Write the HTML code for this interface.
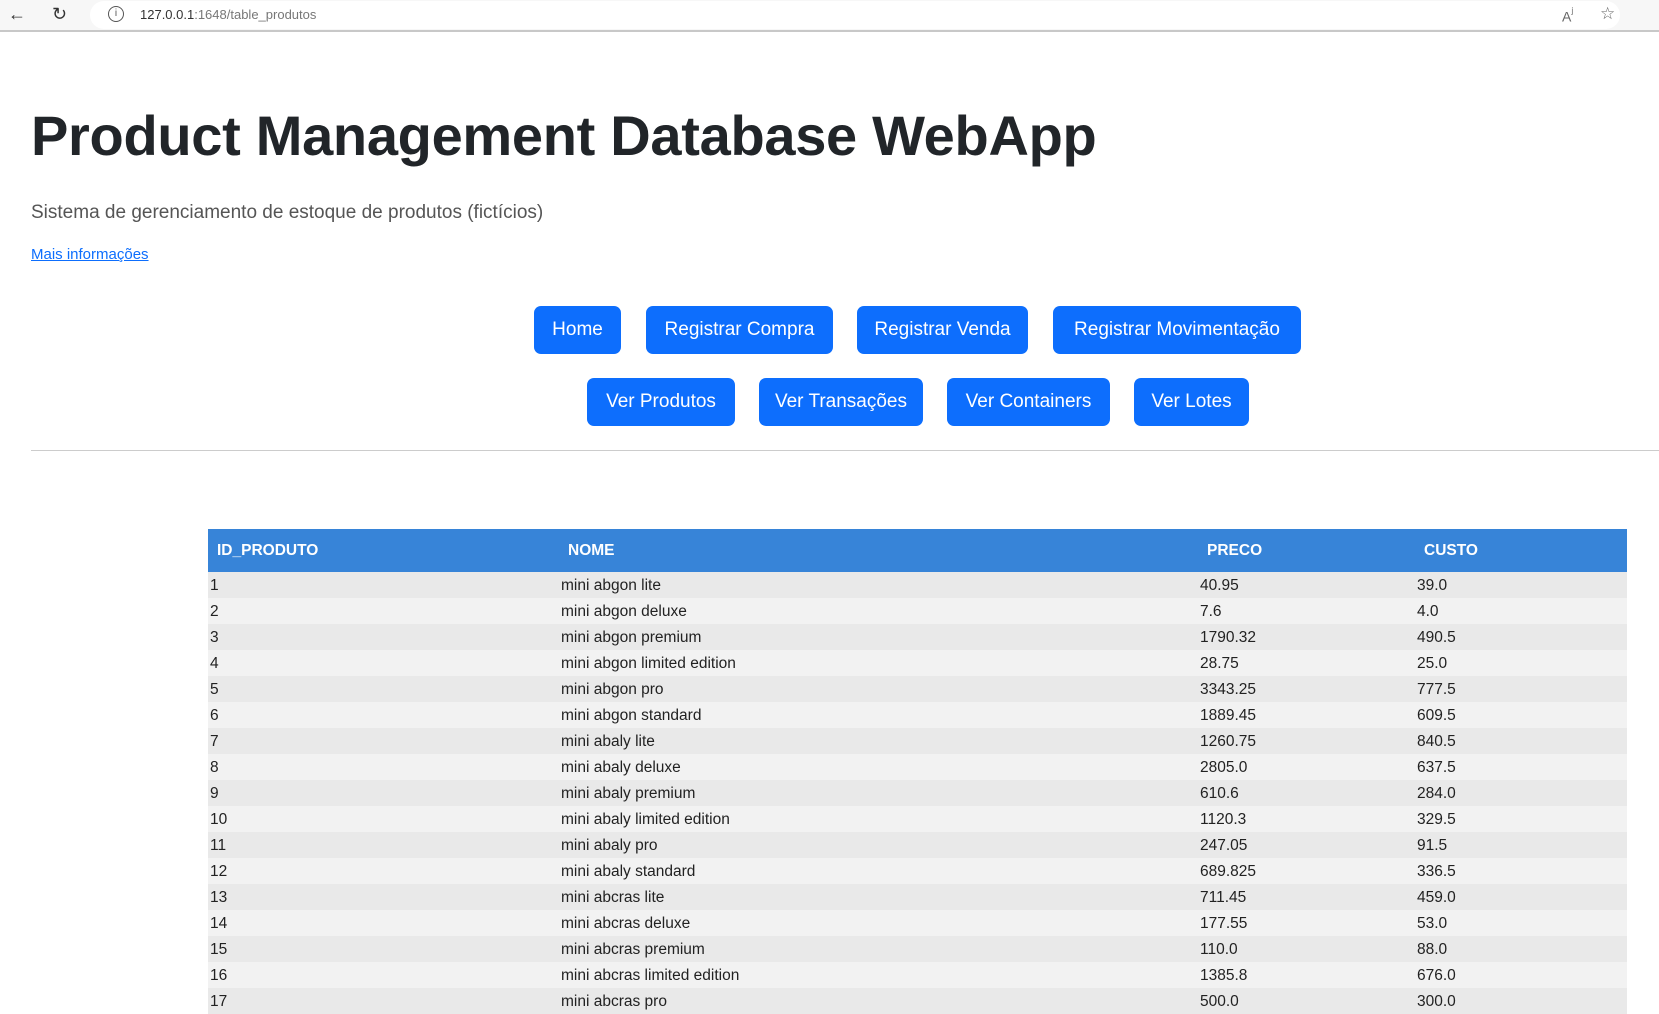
<!DOCTYPE html>
<html><head><meta charset="utf-8"><style>
*{margin:0;padding:0;box-sizing:border-box}
body{width:1659px;height:993px;overflow:hidden;background:#fff;font-family:"Liberation Sans",sans-serif;position:relative}
.bar{position:absolute;left:0;top:0;width:1659px;height:32px;background:#f7f7f7;border-bottom:2px solid #c8c8c8}
.url{position:absolute;left:90px;top:1px;width:1530px;height:28px;background:#fff;border-radius:14px;font-size:13px;color:#333;padding:6px 0 0 50px}
.url span{color:#777}
h1{position:absolute;left:31px;top:103px;font-size:56px;font-weight:bold;color:#212529;letter-spacing:-0.3px;white-space:nowrap}
.sub{position:absolute;left:31px;top:202px;font-size:19px;color:#555}
.lnk{position:absolute;left:31px;top:246px;font-size:15px;color:#0d6efd;text-decoration:underline}
.btn{position:absolute;background:#0d6efd;color:#fff;border-radius:7px;height:48px;font-size:19px;display:flex;align-items:center;justify-content:center;white-space:nowrap}
hr{position:absolute;left:31px;top:450px;width:1628px;border:0;border-top:1px solid #ccc}
table{position:absolute;left:208px;top:529px;width:1419px;border-collapse:collapse;font-size:15.5px;color:#222}
th{background:#3784d8;color:#fff;text-align:left;height:43px;padding-left:9px;font-size:15.5px}
td{height:26px;padding-left:2px;padding-top:2px}
tr:nth-child(odd) td{background:#f2f2f2}
tr:nth-child(even) td{background:#e9e9e9}
</style></head><body>
<div class="bar"><span style="position:absolute;left:8px;top:4px;font-size:18px;color:#333">←</span><span style="position:absolute;left:52px;top:4px;font-size:18px;color:#333">↻</span><div class="url"><span style="position:absolute;left:18px;top:5px;width:16px;height:16px;border:1.5px solid #555;border-radius:50%;font-size:10px;text-align:center;line-height:13px;color:#555">i</span>127.0.0.1<span>:1648/table_produtos</span></div><span style="position:absolute;left:1562px;top:6px;font-size:14px;color:#666">A<sup>ʲ</sup></span><span style="position:absolute;left:1600px;top:4px;font-size:17px;color:#666">☆</span></div>
<h1>Product Management Database WebApp</h1>
<div class="sub">Sistema de gerenciamento de estoque de produtos (fictícios)</div>
<div class="lnk">Mais informações</div>
<div class="btn" style="left:534px;top:306px;width:87px">Home</div>
<div class="btn" style="left:646px;top:306px;width:187px">Registrar Compra</div>
<div class="btn" style="left:857px;top:306px;width:171px">Registrar Venda</div>
<div class="btn" style="left:1053px;top:306px;width:248px">Registrar Movimentação</div>
<div class="btn" style="left:587px;top:378px;width:148px">Ver Produtos</div>
<div class="btn" style="left:759px;top:378px;width:164px">Ver Transações</div>
<div class="btn" style="left:947px;top:378px;width:163px">Ver Containers</div>
<div class="btn" style="left:1134px;top:378px;width:115px">Ver Lotes</div>
<hr>
<table>
<tr><th style="width:351px">ID_PRODUTO</th><th style="width:639px">NOME</th><th style="width:217px">PRECO</th><th>CUSTO</th></tr>
<tr><td>1</td><td>mini abgon lite</td><td>40.95</td><td>39.0</td></tr>
<tr><td>2</td><td>mini abgon deluxe</td><td>7.6</td><td>4.0</td></tr>
<tr><td>3</td><td>mini abgon premium</td><td>1790.32</td><td>490.5</td></tr>
<tr><td>4</td><td>mini abgon limited edition</td><td>28.75</td><td>25.0</td></tr>
<tr><td>5</td><td>mini abgon pro</td><td>3343.25</td><td>777.5</td></tr>
<tr><td>6</td><td>mini abgon standard</td><td>1889.45</td><td>609.5</td></tr>
<tr><td>7</td><td>mini abaly lite</td><td>1260.75</td><td>840.5</td></tr>
<tr><td>8</td><td>mini abaly deluxe</td><td>2805.0</td><td>637.5</td></tr>
<tr><td>9</td><td>mini abaly premium</td><td>610.6</td><td>284.0</td></tr>
<tr><td>10</td><td>mini abaly limited edition</td><td>1120.3</td><td>329.5</td></tr>
<tr><td>11</td><td>mini abaly pro</td><td>247.05</td><td>91.5</td></tr>
<tr><td>12</td><td>mini abaly standard</td><td>689.825</td><td>336.5</td></tr>
<tr><td>13</td><td>mini abcras lite</td><td>711.45</td><td>459.0</td></tr>
<tr><td>14</td><td>mini abcras deluxe</td><td>177.55</td><td>53.0</td></tr>
<tr><td>15</td><td>mini abcras premium</td><td>110.0</td><td>88.0</td></tr>
<tr><td>16</td><td>mini abcras limited edition</td><td>1385.8</td><td>676.0</td></tr>
<tr><td>17</td><td>mini abcras pro</td><td>500.0</td><td>300.0</td></tr>
</table>
</body></html>
